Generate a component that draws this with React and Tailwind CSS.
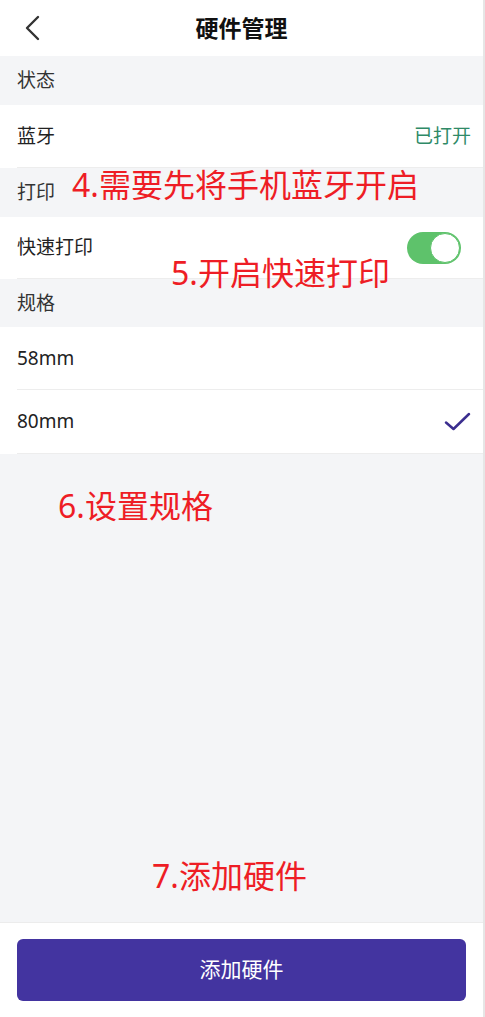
import { useState } from "react";

const font = { fontFamily: '"Noto Sans", "Noto Sans CJK SC", sans-serif' };

const SectionHeader = ({ title, h }) => (
  <div className={`${h} flex items-center pl-[17px] text-[19px] text-[#333]`}>{title}</div>
);

const Row = ({ h, children }) => (
  <div className={`${h} bg-white pl-[17px]`}>
    <div className="h-full flex items-center justify-between border-b border-[#ededed] pr-[12px] text-[19px] text-[#222]">
      {children}
    </div>
  </div>
);

const Toggle = ({ on, onChange }) => (
  <button
    onClick={() => onChange(!on)}
    className={`w-[54px] h-[32px] rounded-full flex items-center p-[1px] ${
      on ? "bg-[#5ec26b] justify-end" : "bg-[#e5e5e5] justify-start"
    }`}
  >
    <span className="block w-[30px] h-[30px] rounded-full bg-white border border-[#5ec26b]" />
  </button>
);

const Note = ({ className, children }) => (
  <div className={`absolute text-[32px] leading-none text-[#ee1d25] whitespace-nowrap ${className}`}>
    {children}
  </div>
);

export default function App() {
  const [fast, setFast] = useState(true);
  const [size, setSize] = useState("80mm");

  return (
    <div style={font} className="relative w-full h-[1017px] flex flex-col bg-[#f4f5f7] border-r-2 border-[#e6e6e6]">
      {/* Header */}
      <div className="h-[56px] bg-white flex items-center relative">
        <button className="absolute left-[20px] top-[12px] w-[28px] h-[32px] flex items-center justify-center">
          <svg width="20" height="26" viewBox="0 0 20 26" fill="none">
            <path d="M14 2 L3 13 L14 24" stroke="#333" strokeWidth="2.4" strokeLinecap="round" strokeLinejoin="round" />
          </svg>
        </button>
        <h1 className="flex-1 text-center text-[23px] font-bold text-[#111]">硬件管理</h1>
      </div>

      <SectionHeader title="状态" h="h-[49px]" />
      <Row h="h-[63px]">
        <span>蓝牙</span>
        <span className="text-[#2f8a67]">已打开</span>
      </Row>

      <SectionHeader title="打印" h="h-[49px]" />
      <Row h="h-[62px]">
        <span>快速打印</span>
        <span className="mr-[10px]">
          <Toggle on={fast} onChange={setFast} />
        </span>
      </Row>

      <SectionHeader title="规格" h="h-[48px]" />
      {["58mm", "80mm"].map((s, i) => (
        <div key={s} onClick={() => setSize(s)}>
          <Row h={i === 0 ? "h-[63px]" : "h-[64px]"}>
            <span>{s}</span>
            {size === s && (
              <svg width="28" height="22" viewBox="0 0 28 22" fill="none">
                <path d="M3 11.5 L10.5 18 L26 3" stroke="#3b2e8f" strokeWidth="2.5" strokeLinecap="round" strokeLinejoin="round" />
              </svg>
            )}
          </Row>
        </div>
      ))}

      <div className="flex-1" />

      {/* Footer */}
      <div className="h-[95px] bg-white border-t border-[#ececec] px-[17px] pt-[16px]">
        <button className="w-full h-[62px] rounded-[6px] bg-[#4334a0] text-white text-[21px]">添加硬件</button>
      </div>

      {/* Annotations */}
      <Note className="left-[72px] top-[169px]">4.需要先将手机蓝牙开启</Note>
      <Note className="left-[171px] top-[257px]">5.开启快速打印</Note>
      <Note className="left-[58px] top-[490px]">6.设置规格</Note>
      <Note className="left-[152px] top-[860px]">7.添加硬件</Note>
    </div>
  );
}
